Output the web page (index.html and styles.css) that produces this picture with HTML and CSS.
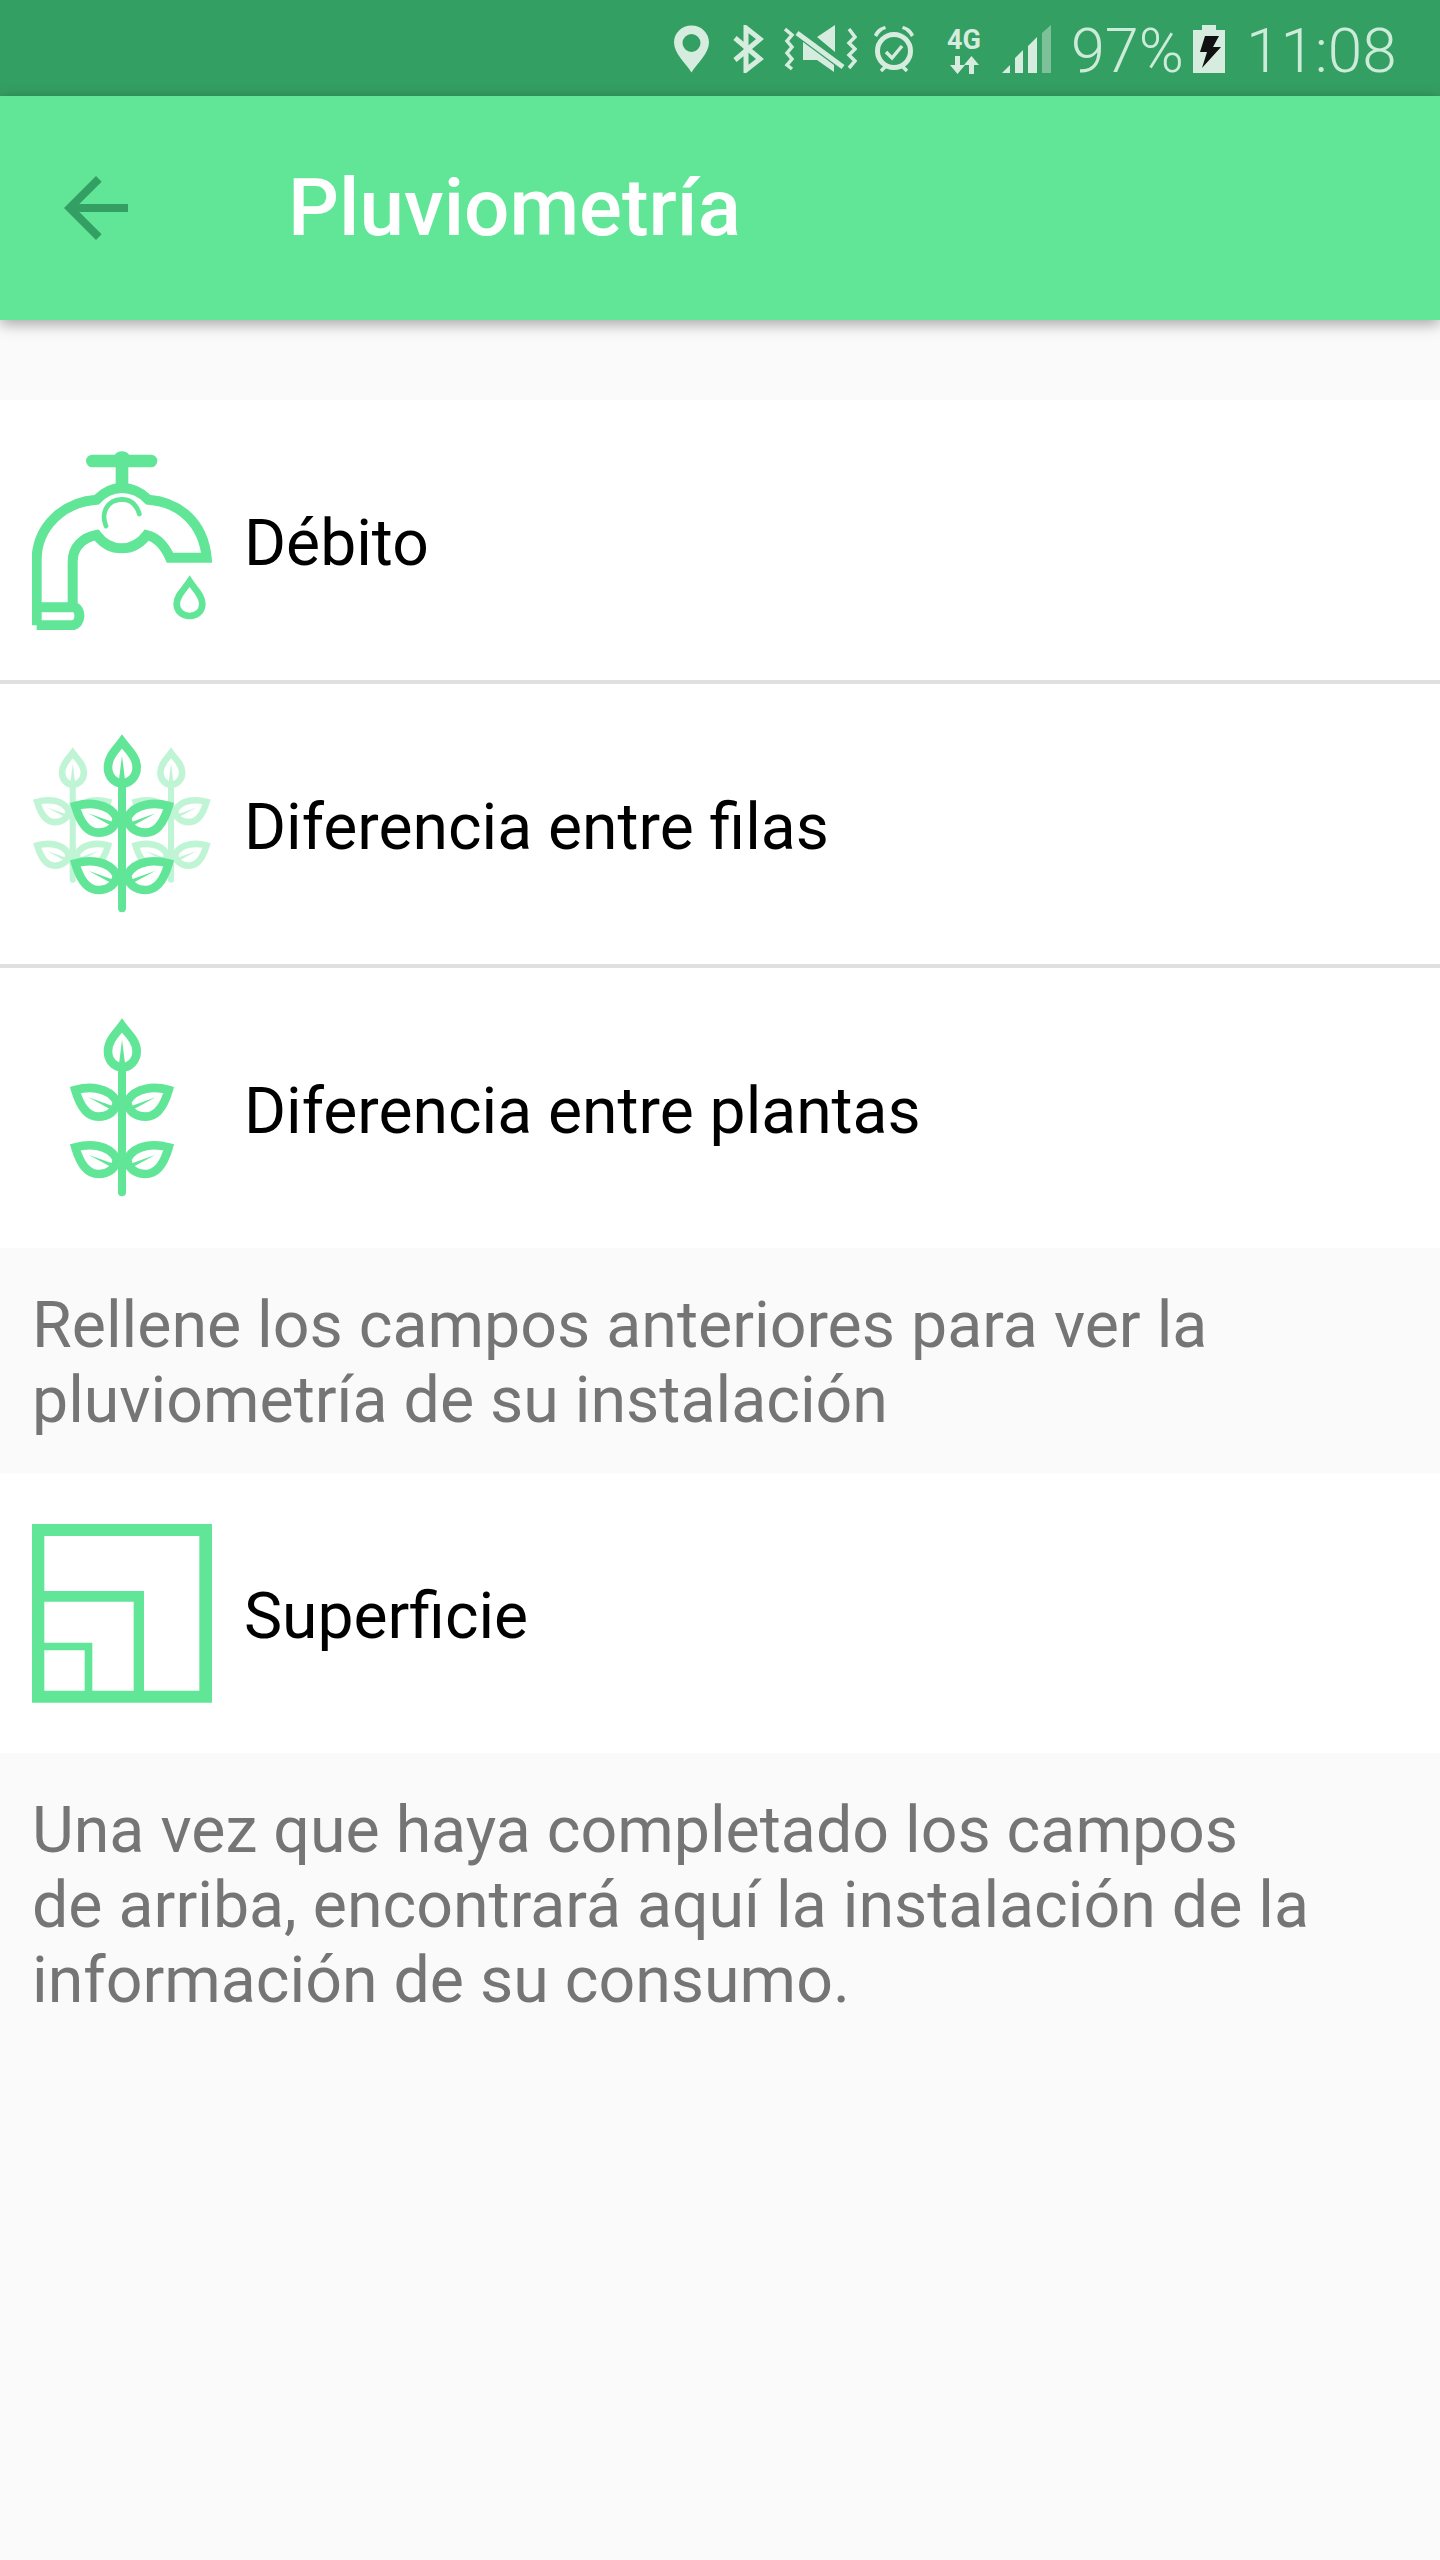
FILE: index.html
```html
<!DOCTYPE html>
<html lang="es">
<head>
    <meta charset="UTF-8">
    <meta name="viewport" content="width=device-width, initial-scale=1.0">
    <title>Pluviometría</title>
    <link rel="stylesheet" href="styles.css">
</head>
<body>
    <svg class="defs" width="0" height="0">
        <defs>
            <g id="sprig">
                <path class="stem" d="M366 250V638"/>
                <path class="leaf" d="M366 138C350 160 324 182 324 215C324 245 345 263 366 263C388 263 410 245 410 215C410 182 382 160 366 138Z"/>
                <path class="vein" d="M366 180L357 252H375Z"/>
                <g id="leaf-pair">
                    <path class="leaf" d="M226 331C265 320 325 320 350 365C350 393 325 411 295 411C260 411 240 380 226 331Z"/>
                    <path class="vein" d="M265 353L340 380L335 391Z"/>
                    <path class="leaf" d="M506 331C467 320 407 320 382 365C382 393 407 411 437 411C472 411 492 380 506 331Z"/>
                    <path class="vein" d="M467 353L392 380L397 391Z"/>
                </g>
                <use href="#leaf-pair" y="172"/>
                <path class="stem" d="M366 340V400"/>
                <path class="stem" d="M366 510V575"/>
            </g>
        </defs>
    </svg>

    <div class="status-bar">
        <!-- pin -->
        <svg class="st-icon st-pin" viewBox="0 0 35 47"><path fill-rule="evenodd" d="M17.500 0C7.800 0 0 7.500 0 17C0 28 12 38 17.500 47C23 38 35 28 35 17C35 7.500 27.200 0 17.500 0ZM17.500 8.500A9 9 0 1 1 17.500 26.500A9 9 0 1 1 17.500 8.500Z"/></svg>
        <!-- bluetooth -->
        <svg class="st-icon st-bt" viewBox="0 0 31 48"><path class="line" d="M2 13L27 34L13 45V3L27 14L2 35"/></svg>
        <!-- vibrate + mute -->
        <svg class="st-icon st-mute" viewBox="0 0 73 48">
            <path class="line thin" d="M1 4L8 10L3 16L8 22L3 28L8 34L3 40L8 44"/>
            <path class="line thin" d="M65 4L71 12L65 18L71 24L65 30L71 36L65 43"/>
            <path d="M33 12L51 0V27ZM19 17L50 40V47L33 35H19Z"/>
            <path class="line" d="M13 8L59 42"/>
        </svg>
        <!-- alarm -->
        <svg class="st-icon st-alarm" viewBox="0 0 42 48">
            <circle class="line" cx="21" cy="26" r="16.500"/>
            <path class="line thin" d="M12 42L8 46M30 42L34 46M13 27L19 33L29 21"/>
            <path d="M1 10C3 5 7 2 12 1L13 4C9 5 6 8 4 12ZM41 10C39 5 35 2 30 1L29 4C33 5 36 8 38 12Z"/>
        </svg>
        <!-- 4G -->
        <div class="st-net">
            <span class="st-net-label">4G</span>
            <svg class="st-arrows" viewBox="0 0 30 18"><path d="M6 0H11V9H16L8.500 18L1 9H6ZM20 18H25V9H30L22.500 0L15 9H20Z"/></svg>
        </div>
        <!-- signal -->
        <svg class="st-icon st-signal" viewBox="0 0 49 48">
            <path d="M0 48L8 40V48ZM13 48V33L21 25V48ZM26 48V21L35 12V48Z"/>
            <path class="faded" d="M40 48V8L49 0V48Z"/>
        </svg>
        <span class="st-pct">97%</span>
        <!-- battery -->
        <svg class="st-icon st-batt" viewBox="0 0 32 48">
            <path d="M9 0H23V5H32V48H0V5H9Z"/>
            <path class="bolt" d="M12 11H26L20 22H28L9 43L14 27H7Z"/>
        </svg>
        <span class="st-time">11:08</span>
    </div>

    <header class="toolbar">
        <svg class="back" viewBox="0 0 24 24"><path d="M20 11H7.830l5.590-5.590L12 4l-8 8 8 8 1.410-1.410L7.830 13H20v-2z"/></svg>
        <h1 class="title">Pluviometría</h1>
    </header>

    <main class="content">
        <div class="row">
            <svg class="row-icon" viewBox="96 90 540 540">
                <g class="draw">
                    <path d="M110 616V420C110 320 190 246 290 239C315 213 340 204 365 204C395 204 420 213 445 239C540 246 610 310 620 413H510C495 380 470 352 440 345C420 372 395 385 365 385C335 385 310 372 290 345C250 352 218 380 218 425V562"/>
                    <path d="M110 562H220C245 562 245 616 215 616H110"/>
                    <path class="fine" d="M318 318C302 280 320 240 365 238C392 238 410 255 418 282"/>
                    <path class="drop" d="M569 484C552 510 530 526 530 552C530 574 548 588 569 588C590 588 607 574 607 552C607 526 586 510 569 484Z"/>
                </g>
                <path class="solid" d="M277 104H345C350 90 382 90 387 104H453A19 19 0 0 1 453 142H385V195H347V142H277A19 19 0 0 1 277 104Z"/>
            </svg>
            <span class="row-label">Débito</span>
        </div>
        <div class="row">
            <svg class="row-icon" viewBox="96 115 540 540">
                <g class="ghost">
                    <use href="#sprig" transform="translate(-60 67) scale(0.76)"/>
                    <use href="#sprig" transform="translate(235 67) scale(0.76)"/>
                </g>
                <use href="#sprig"/>
            </svg>
            <span class="row-label">Diferencia entre filas</span>
        </div>
        <div class="row no-line">
            <svg class="row-icon" viewBox="96 115 540 540"><use href="#sprig"/></svg>
            <span class="row-label">Diferencia entre plantas</span>
        </div>

        <p class="hint hint-first">Rellene los campos anteriores para ver la pluviometría de su instalación</p>

        <div class="row no-line">
            <svg class="row-icon" viewBox="96 129 540 540">
                <path class="solid" fill-rule="evenodd" d="M96 132H636V668H96ZM133 168V333H432V632H598V168ZM133 365V488H277V632H401V365ZM133 511V632H254V511Z"/>
            </svg>
            <span class="row-label">Superficie</span>
        </div>

        <p class="hint hint-last">Una vez que haya completado los campos<br>de arriba, encontrará aquí la instalación de la información de su consumo.</p>
    </main>
</body>
</html>
```

FILE: styles.css
```css
html, body {
    margin: 0;
    padding: 0;
}
body {
    width: 1440px;
    height: 2560px;
    overflow: hidden;
    background-color: #fafafa;
    font-family: Roboto, "Liberation Sans", sans-serif;
}
.defs {
    display: block;
    height: 0;
}
.status-bar {
    height: 96px;
    background: #349f62;
    color: #cdebd9;
    display: flex;
    align-items: flex-start;
    padding-top: 25px;
    padding-left: 674px;
    box-sizing: border-box;
    fill: #d6ecdf;
    stroke: none;
}
.st-icon {
    display: block;
    height: 48px;
    flex: none;
}
.st-icon .line {
    fill: none;
    stroke: #d6ecdf;
    stroke-width: 5;
}
.st-icon .line.thin {
    stroke-width: 3.500;
}
.st-pin {
    width: 35px;
}
.st-bt {
    width: 31px;
    margin-left: 24px;
}
.st-mute {
    width: 73px;
    margin-left: 20px;
}
.st-alarm {
    width: 42px;
    margin-left: 16px;
}
.st-net {
    width: 38px;
    margin-left: 30px;
    display: flex;
    flex-direction: column;
    align-items: center;
}
.st-net-label {
    font-size: 27px;
    line-height: 27px;
    font-weight: 700;
    color: #d6ecdf;
    height: 29px;
    margin-top: 2px;
}
.st-arrows {
    width: 30px;
    height: 18px;
}
.st-signal {
    width: 49px;
    margin-left: 19px;
}
.st-signal .faded {
    opacity: 0.45;
}
.st-pct {
    width: 110px;
    margin-left: 20px;
    margin-top: 2px;
    font-size: 61px;
    line-height: 48px;
    font-weight: 300;
    white-space: nowrap;
}
.st-batt {
    width: 32px;
    margin-left: 12px;
}
.st-batt .bolt {
    fill: #111;
}
.st-time {
    margin-left: 21px;
    margin-top: 2px;
    font-size: 62px;
    line-height: 48px;
    font-weight: 300;
}
.toolbar {
    height: 224px;
    background: #61e698;
    display: flex;
    align-items: center;
    box-shadow: 0 4px 14px rgba(0, 0, 0, 0.35);
    position: relative;
    padding-left: 48px;
}
.back {
    width: 96px;
    height: 96px;
    fill: #349f62;
    flex: none;
}
.title {
    margin: 0 0 0 144px;
    color: #fff;
    font-size: 80px;
    font-weight: 500;
}
.content {
    padding-top: 80px;
}
.row {
    height: 280px;
    background: #fff;
    border-bottom: 4px solid #e0e0e0;
    display: flex;
    align-items: center;
    padding-left: 32px;
}
.row.no-line {
    border-bottom: none;
}
.row-icon {
    width: 180px;
    height: 180px;
    flex: none;
}
.row-label {
    margin-left: 32px;
    margin-top: 6px;
    font-size: 64.200px;
    color: #000;
}
.row-icon .draw path {
    fill: none;
    stroke: #61e698;
    stroke-width: 30;
    stroke-miterlimit: 10;
}
.row-icon .draw .fine {
    stroke-width: 14;
    stroke-linecap: round;
}
.row-icon .draw .drop {
    stroke-width: 20;
}
.solid {
    fill: #61e698;
}
.stem {
    fill: none;
    stroke: #61e698;
    stroke-width: 24;
    stroke-linecap: round;
}
.leaf {
    fill: #fff;
    stroke: #61e698;
    stroke-width: 26;
    stroke-miterlimit: 10;
}
.vein {
    fill: #61e698;
}
.ghost {
    opacity: 0.4;
}
.hint {
    margin: 0;
    padding: 0 32px;
    font-size: 64.450px;
    line-height: 75px;
    color: #757575;
}
.hint-first {
    height: 225px;
    padding-top: 40px;
    box-sizing: border-box;
}
.hint-last {
    padding-top: 40px;
}
```
